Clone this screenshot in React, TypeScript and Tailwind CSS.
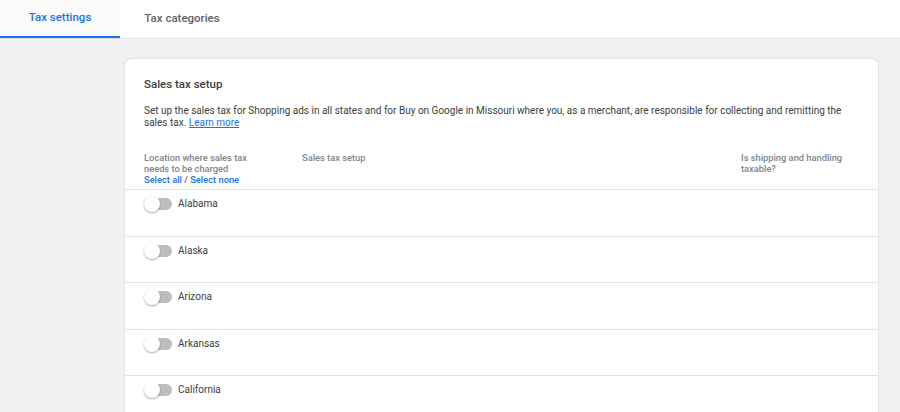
import React from "react";

const states = ["Alabama", "Alaska", "Arizona", "Arkansas", "California", "Colorado"];

function Toggle() {
  return (
    <div className="relative h-[16px] w-[28px] shrink-0">
      <div className="absolute left-[2px] right-0 top-[2px] h-[12px] rounded-full bg-[#bdbdbd]" />
      <div className="absolute left-0 top-0 h-[16px] w-[16px] rounded-full bg-white shadow-[0_1px_2px_rgba(0,0,0,0.35)]" />
    </div>
  );
}

export default function App() {
  return (
    <div className="h-[412px] overflow-hidden bg-[#f1f1f1] font-['Roboto',sans-serif] text-[#3c4043]">
      {/* Tabs */}
      <div className="flex h-[39px] border-b border-[#e3e3e3] bg-white">
        <div className="flex w-[120px] items-center justify-center border-b-2 border-[#1a73e8] bg-[#fafafa] text-[11.5px] font-medium text-[#1a73e8]">
          Tax settings
        </div>
        <div className="flex w-[124px] items-center justify-center text-[11.5px] font-medium text-[#5f6368]">
          Tax categories
        </div>
      </div>

      <div className="pl-[124px] pr-[21px] pt-[19px]">
        <div className="rounded-[8px] border border-[#e3e3e3] bg-white">
          <div className="px-[19px] pt-[17px]">
            <h2 className="text-[11.5px] font-medium leading-[16px] text-[#3c4043]">Sales tax setup</h2>
            <p className="mt-[13px] text-[10px] leading-[12px] text-[#3c4043]">
              Set up the sales tax for Shopping ads in all states and for Buy on Google in Missouri where you, as a merchant, are responsible for collecting and remitting the sales tax.{" "}
              <a className="text-[#1a73e8] underline">Learn more</a>
            </p>
          </div>

          <div className="mt-[23px] flex px-[19px] pb-[4px] text-[9.3px] font-medium leading-[11px] text-[#80868b]">
            <div className="w-[158px] pr-[40px]">
              <div>Location where sales tax needs to be charged</div>
              <div className="whitespace-nowrap text-[#1a73e8]">
                Select all <span className="text-[#5f6368]">/</span> Select none
              </div>
            </div>
            <div className="flex-1">Sales tax setup</div>
            <div className="w-[118px]">Is shipping and handling taxable?</div>
          </div>

          {states.map((s) => (
            <div key={s} className="flex h-[46.5px] items-start gap-[6px] border-t border-[#e3e3e3] px-[19px] pt-[6px]">
              <Toggle />
              <span className="text-[10px] leading-[16px] text-[#3c4043]">{s}</span>
            </div>
          ))}
        </div>
      </div>
    </div>
  );
}
